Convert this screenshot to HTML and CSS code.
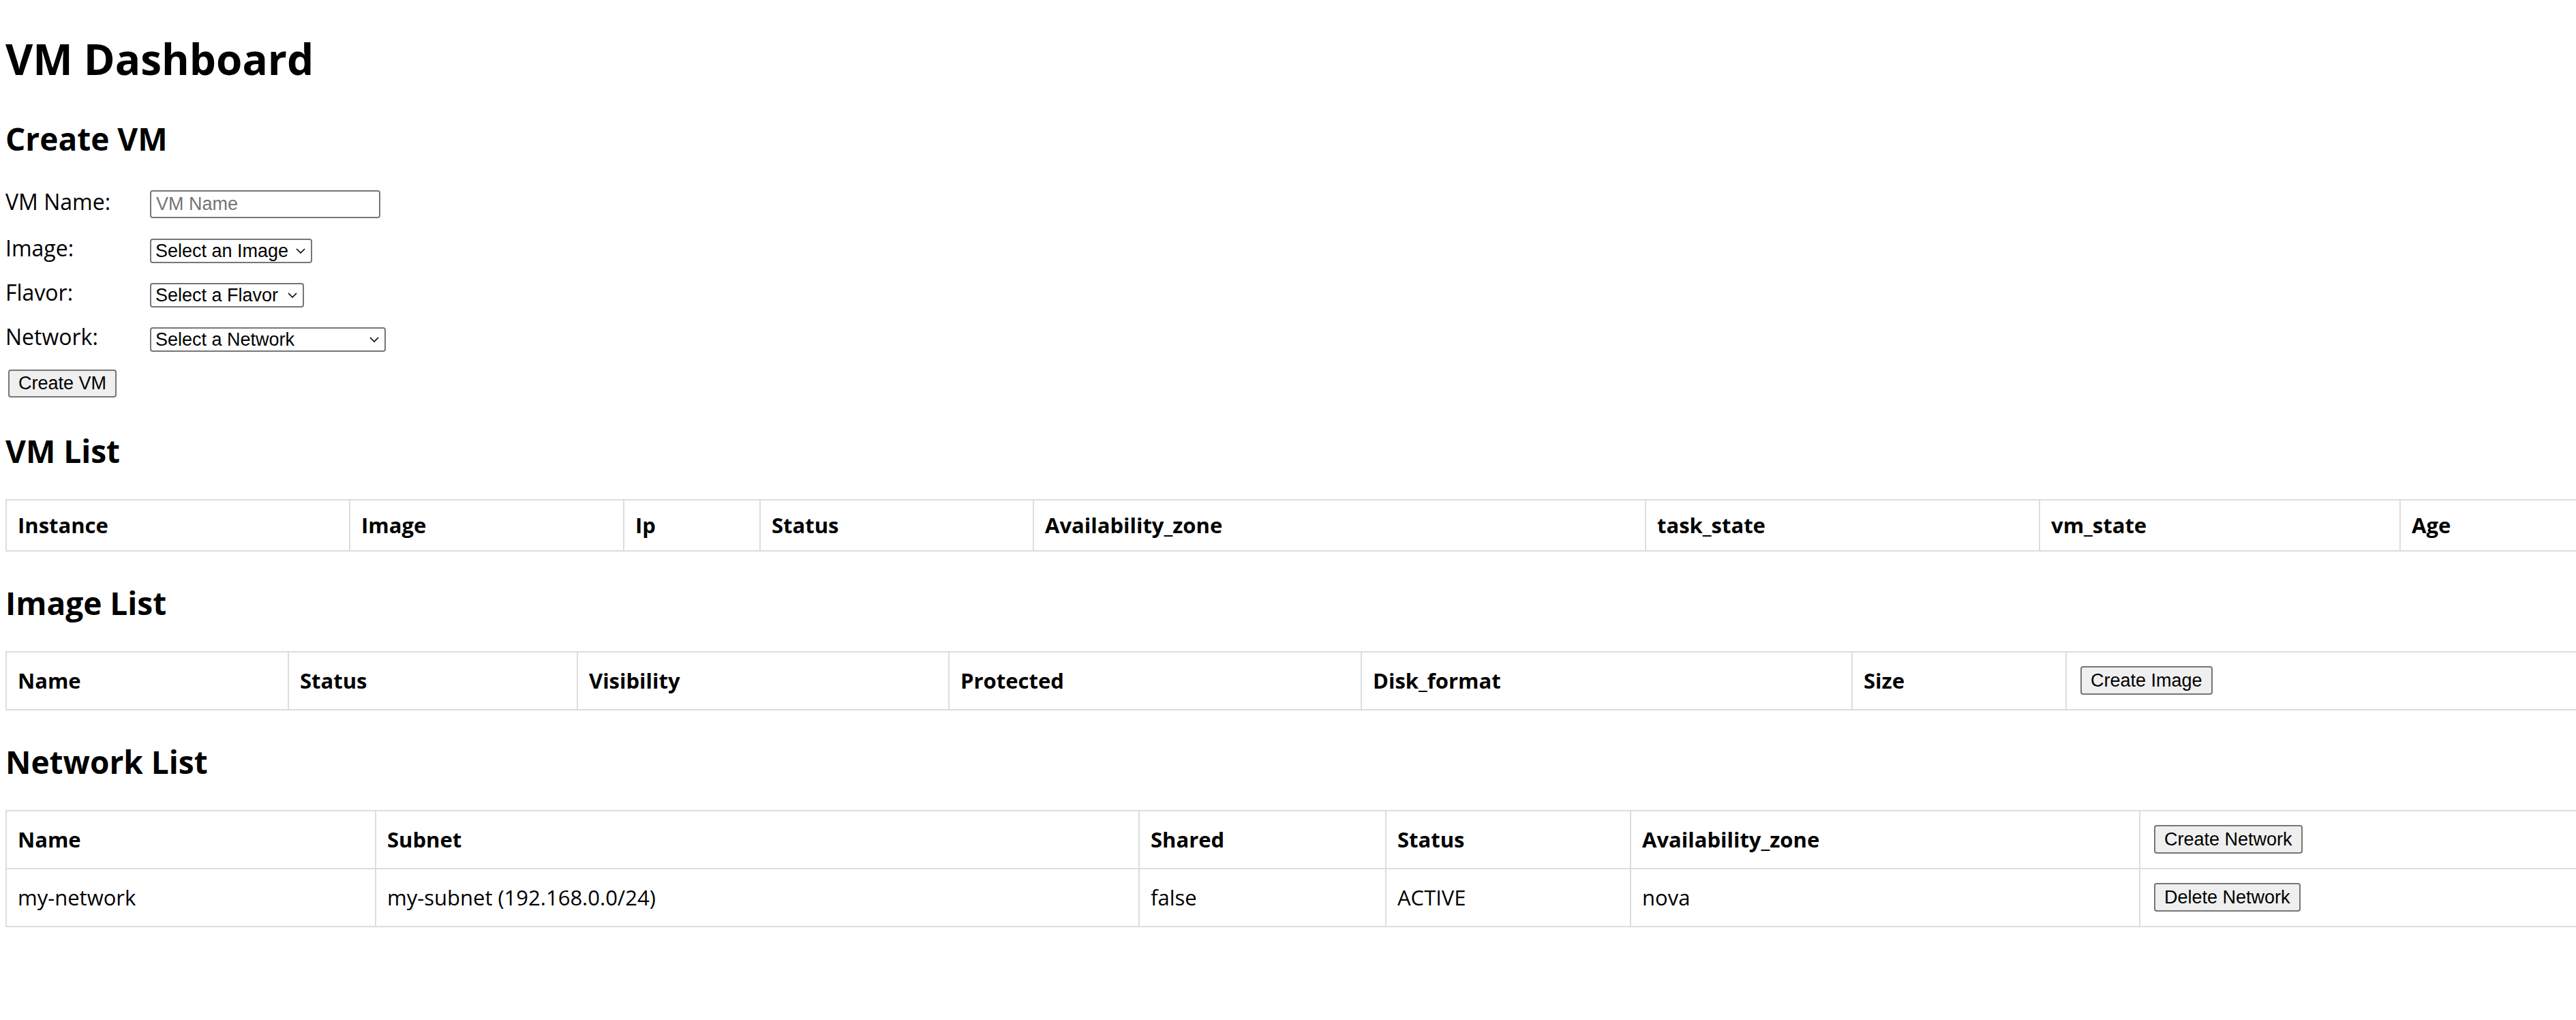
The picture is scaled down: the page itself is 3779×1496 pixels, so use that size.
FILE: index.html
```html
<!DOCTYPE html>
<html lang="en">
<head>
<meta charset="utf-8">
<title>VM Dashboard</title>
<link rel="stylesheet" href="styles.css">
</head>
<body>
<h1 class="title">VM Dashboard</h1>

<h2 class="section-title first">Create VM</h2>
<form class="vm-form">
  <div class="form-row row-first">
    <label class="form-label" for="vmname">VM Name:</label>
    <input class="text-input" id="vmname" type="text" placeholder="VM Name">
  </div>
  <div class="form-row">
    <label class="form-label" for="img">Image:</label>
    <span class="select-wrap">
      <select class="select sel-image" id="img"><option>Select an Image</option></select>
      <svg class="chevron" viewBox="0 0 14 8" width="14" height="8"><path d="M1 1 L7 7 L13 1"/></svg>
    </span>
  </div>
  <div class="form-row">
    <label class="form-label" for="flv">Flavor:</label>
    <span class="select-wrap">
      <select class="select sel-flavor" id="flv"><option>Select a Flavor</option></select>
      <svg class="chevron" viewBox="0 0 14 8" width="14" height="8"><path d="M1 1 L7 7 L13 1"/></svg>
    </span>
  </div>
  <div class="form-row">
    <label class="form-label" for="net">Network:</label>
    <span class="select-wrap">
      <select class="select sel-network" id="net"><option>Select a Network</option></select>
      <svg class="chevron" viewBox="0 0 14 8" width="14" height="8"><path d="M1 1 L7 7 L13 1"/></svg>
    </span>
  </div>
  <div class="form-row">
    <button class="btn btn-create-vm" type="button">Create VM</button>
  </div>
</form>

<h2 class="section-title">VM List</h2>
<table class="data-table vm-table">
  <colgroup><col><col><col><col><col><col><col><col></colgroup>
  <thead>
    <tr>
      <th>Instance</th><th>Image</th><th>Ip</th><th>Status</th><th>Availability_zone</th><th>task_state</th><th>vm_state</th><th>Age</th>
    </tr>
  </thead>
</table>

<h2 class="section-title">Image List</h2>
<table class="data-table image-table">
  <colgroup><col><col><col><col><col><col><col></colgroup>
  <thead>
    <tr>
      <th>Name</th><th>Status</th><th>Visibility</th><th>Protected</th><th>Disk_format</th><th>Size</th>
      <th><button class="btn btn-cell" type="button">Create Image</button></th>
    </tr>
  </thead>
</table>

<h2 class="section-title">Network List</h2>
<table class="data-table network-table">
  <colgroup><col><col><col><col><col><col></colgroup>
  <thead>
    <tr>
      <th>Name</th><th>Subnet</th><th>Shared</th><th>Status</th><th>Availability_zone</th>
      <th><button class="btn btn-cell" type="button">Create Network</button></th>
    </tr>
  </thead>
  <tbody>
    <tr>
      <td>my-network</td><td>my-subnet (192.168.0.0/24)</td><td>false</td><td>ACTIVE</td><td>nova</td>
      <td><button class="btn btn-cell" type="button">Delete Network</button></td>
    </tr>
  </tbody>
</table>
</body>
</html>
```

FILE: styles.css
```css
html {
  overflow: hidden;
  background: #ffffff;
}

body {
  margin: 0;
  padding: 0 0 0 8px;
  font-family: "Open Sans", "Noto Sans", sans-serif;
  color: #000000;
  background: #ffffff;
}

.title {
  margin: 46px 0 0;
  font-size: 62px;
  line-height: 80px;
  font-weight: 700;
}

.section-title {
  margin: 45px 0 41px;
  font-size: 46px;
  line-height: 60px;
  font-weight: 700;
}

.section-title.first {
  margin: 47px 0 34px;
}

.vm-form {
  display: flex;
  flex-direction: column;
  margin: 0 0 -9px;
}

.form-row {
  display: flex;
  align-items: center;
  height: 65px;
}

.row-first {
  margin-bottom: 3px;
}

.form-label {
  width: 212px;
  flex: none;
  font-size: 32px;
  line-height: 44px;
  padding-bottom: 8px;
}

.text-input {
  box-sizing: border-box;
  width: 338px;
  height: 41px;
  margin: 0;
  padding: 0 7px;
  border: 2px solid #767676;
  border-radius: 4px;
  font-family: "Liberation Sans", Arial, sans-serif;
  font-size: 27px;
  color: #000000;
  background: #ffffff;
}

.text-input::placeholder {
  color: #757575;
}

.select-wrap {
  position: relative;
  display: inline-flex;
}

.select {
  box-sizing: border-box;
  height: 36px;
  margin: 0;
  padding: 0 28px 0 6px;
  border: 2px solid #767676;
  border-radius: 4px;
  font-family: "Liberation Sans", Arial, sans-serif;
  font-size: 27px;
  color: #000000;
  background: #ffffff;
  appearance: none;
  -webkit-appearance: none;
}

.chevron {
  position: absolute;
  right: 10px;
  top: 14px;
  pointer-events: none;
}

.chevron path {
  fill: none;
  stroke: #000000;
  stroke-width: 1.6;
}

.sel-image { width: 238px; }
.sel-flavor { width: 226px; }
.sel-network { width: 346px; }

.btn {
  box-sizing: border-box;
  margin: 0;
  padding: 0 13px;
  border: 2px solid #767676;
  border-radius: 4px;
  background: #efefef;
  font-family: "Liberation Sans", Arial, sans-serif;
  font-size: 27px;
  color: #000000;
  white-space: nowrap;
}

.btn-create-vm {
  height: 41px;
  margin-left: 4px;
}

.btn-cell {
  display: block;
  height: 42px;
  margin: 5px 0 6px 4px;
}

.data-table {
  width: 3790px;
  table-layout: fixed;
  border-collapse: collapse;
  font-size: 31px;
}

.data-table th,
.data-table td {
  border: 2px solid #dddddd;
  padding: 15px 16px;
  line-height: 43px;
  text-align: left;
  vertical-align: middle;
  white-space: nowrap;
}

.data-table th {
  font-weight: 700;
}

.data-table td {
  font-weight: 400;
}

.vm-table col:nth-child(1) { width: 504px; }
.vm-table col:nth-child(2) { width: 402px; }
.vm-table col:nth-child(3) { width: 200px; }
.vm-table col:nth-child(4) { width: 401px; }
.vm-table col:nth-child(5) { width: 898px; }
.vm-table col:nth-child(6) { width: 578px; }
.vm-table col:nth-child(7) { width: 529px; }

.image-table col:nth-child(1) { width: 414px; }
.image-table col:nth-child(2) { width: 424px; }
.image-table col:nth-child(3) { width: 545px; }
.image-table col:nth-child(4) { width: 605px; }
.image-table col:nth-child(5) { width: 720px; }
.image-table col:nth-child(6) { width: 314px; }

.network-table col:nth-child(1) { width: 542px; }
.network-table col:nth-child(2) { width: 1120px; }
.network-table col:nth-child(3) { width: 362px; }
.network-table col:nth-child(4) { width: 359px; }
.network-table col:nth-child(5) { width: 747px; }
```
